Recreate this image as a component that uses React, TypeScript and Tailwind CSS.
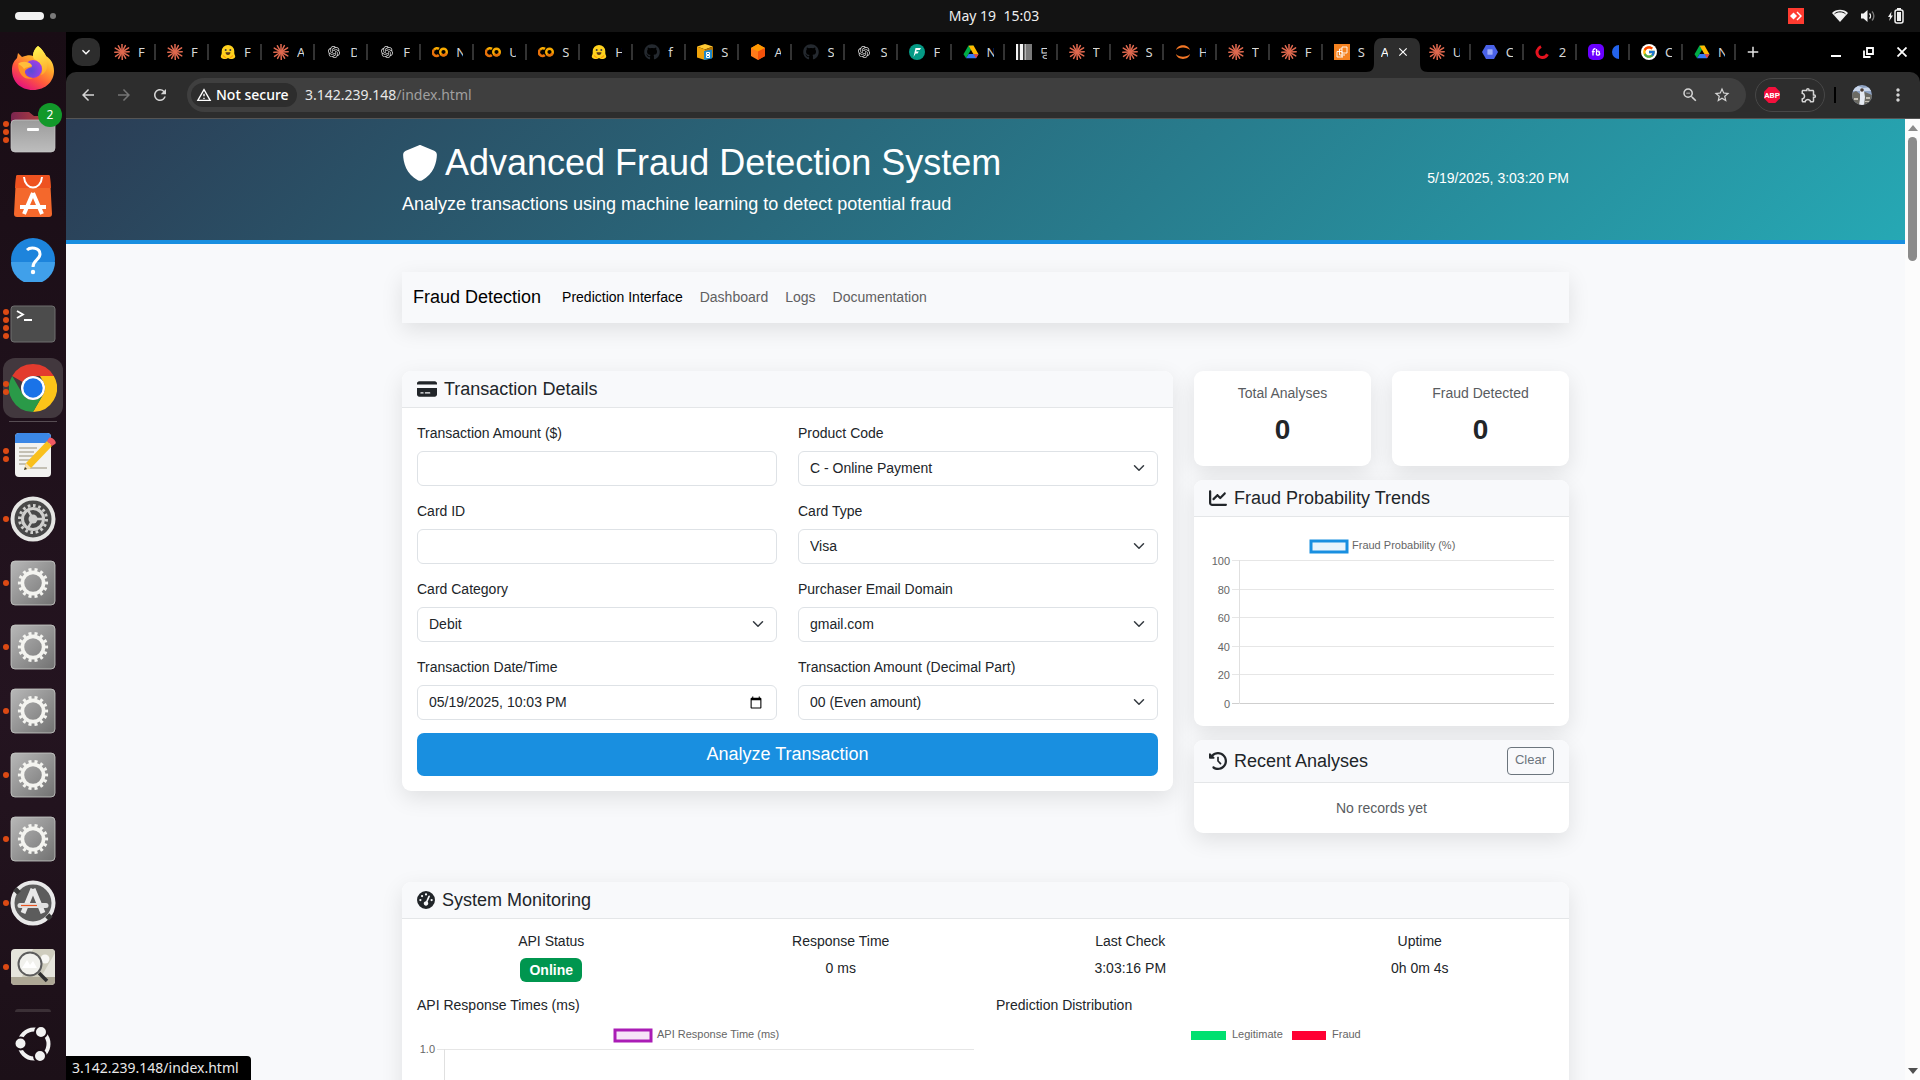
import React from "react";
import { FaShield, FaCreditCard, FaChartLine, FaClockRotateLeft, FaGaugeHigh, FaGithub } from "react-icons/fa6";
import { FcGoogle } from "react-icons/fc";
import { SiOpenai } from "react-icons/si";
import { MdArrowBack, MdArrowForward, MdRefresh, MdOutlineWarningAmber, MdStarBorder, MdMoreVert, MdOutlineExtension, MdZoomOut, MdAdd, MdClose, MdKeyboardArrowDown } from "react-icons/md";

const uiFont = "font-['Noto_Sans',sans-serif]";

/* ---------- Tab favicons ---------- */

function ClaudeIcon() {
  const rays = [0, 28, 58, 88, 120, 150, 178, 208, 236, 268, 300, 330];
  return (
    <svg viewBox="0 0 16 16" className="size-4">
      {rays.map((a, i) => (
        <line key={a} x1="8" y1="8" x2="8" y2={i % 2 ? 0.8 : 0.2} stroke="#e0694f" strokeWidth="1.5" strokeLinecap="round" transform={`rotate(${a} 8 8)`} />
      ))}
    </svg>
  );
}

function HuggingIcon() {
  return (
    <svg viewBox="0 0 16 16" className="size-4">
      <path d="M8 1a6.300 6.300 0 0 1 6.300 6.300c0 1.700-.2 2.500.7 4.200.7 1.500-.2 3-2 3.300C10 15.400 9 14.200 8 14.200s-2 1.200-5 .6c-1.800-.3-2.700-1.800-2-3.300.9-1.700.7-2.500.7-4.200A6.300 6.300 0 0 1 8 1z" fill="#ffd21e" />
      <circle cx="5.700" cy="6" r="1" fill="#3a3b45" />
      <circle cx="10.300" cy="6" r="1" fill="#3a3b45" />
      <path d="M5.500 8.300h5c0 1.600-1 2.600-2.500 2.600s-2.500-1-2.500-2.600z" fill="#5b3a1a" />
      <path d="M3 11.500l3 2.500M13 11.500l-3 2.500" stroke="#ff9d0b" strokeWidth="1.200" />
    </svg>
  );
}

function ColabIcon() {
  return (
    <svg viewBox="0 0 16 16" className="size-4">
      <circle cx="11.500" cy="8" r="3.300" fill="none" stroke="#f9ab00" strokeWidth="2.400" />
      <path d="M7 4.900A3.500 3.500 0 0 0 2.100 5.700" fill="none" stroke="#f9ab00" strokeWidth="2.600" />
      <path d="M2.100 5.700A3.500 3.500 0 0 0 6.800 11" fill="none" stroke="#e8710a" strokeWidth="2.600" />
      <path d="M9.200 10.300a3.300 3.300 0 0 0 5.400-1" fill="none" stroke="#e8710a" strokeWidth="2.400" />
    </svg>
  );
}

function DriveIcon() {
  return (
    <svg viewBox="0 0 16 16" className="size-4">
      <path d="M5.500 1.500h5L8 6z" fill="#188038" />
      <path d="M5.500 1.500L.5 10.200l2.500 4L8 5.800z" fill="#00ac47" />
      <path d="M10.500 1.500l5 8.700h-5L5.600 1.700z" fill="#ffba00" />
      <path d="M3 14.200l2.600-4.300h9.900L13 14.200z" fill="#3478f6" />
      <path d="M15.500 10.200L13 14.200l-2.500-4z" fill="#ea4335" />
    </svg>
  );
}

function GptIcon() {
  return <SiOpenai className="size-3 text-[#d8d8d8]" />;
}

function GithubIcon() {
  return <FaGithub className="size-4 text-[#24292f]" />;
}

function BucketIcon() {
  return (
    <svg viewBox="0 0 16 16" className="size-4">
      <path d="M0 2.500L8 0l8 2.500-8 3z" fill="#ffc933" />
      <path d="M0 2.500l8 3V16l-8-2.500z" fill="#f0a30a" />
      <path d="M8 5.500l8-3v11L8 16z" fill="#b87400" />
      <path d="M7 7l8-1.500v9L7 16z" fill="#1e88c9" />
      <path d="M9.500 8.500h3v2h-3zM9.500 11.500h3v2h-3z" fill="none" stroke="#fff" strokeWidth="1" />
    </svg>
  );
}

function CubeIcon() {
  return (
    <svg viewBox="0 0 16 16" className="size-4">
      <path d="M8 0l7 4v8l-7 4-7-4V4z" fill="#ff7a1a" />
      <path d="M8 0l7 4-7 3.500L1 4z" fill="#ff9900" />
      <path d="M8 7.500L15 4v8l-7 4z" fill="#f4510b" />
    </svg>
  );
}

function GreenFIcon() {
  return (
    <svg viewBox="0 0 16 16" className="size-4">
      <circle cx="8" cy="8" r="8" fill="#059a85" />
      <path d="M6.500 4h5.500l-1.200 2H7.600l-.4 1.500h2.600L8.600 9.400H6.700L4.500 13z" fill="#fff" />
    </svg>
  );
}

function StripesIcon() {
  return (
    <svg viewBox="0 0 16 16" className="size-4">
      <rect width="16" height="16" fill="#7a7a7a" />
      <path d="M0 0h2v16H0zM4 0h3v16H4zM8.500 0h1v16h-1z" fill="#f4f4f4" />
      <path d="M2 0h2v16H2zM7 0h1.500v16H7z" fill="#333" />
    </svg>
  );
}

function JupyterIcon() {
  return (
    <svg viewBox="0 0 16 16" className="size-4">
      <path d="M1 6C2.500-.5 13.500-.5 15 6 12 2.500 4 2.500 1 6zM1 10c1.500 6.500 12.500 6.500 14 0-3 3.500-11 3.500-14 0z" fill="#f37726" />
    </svg>
  );
}

function Ec2Icon() {
  return (
    <svg viewBox="0 0 16 16" className="size-4">
      <rect width="16" height="16" fill="#f58220" />
      <path d="M8 3h5v6H8zM5.500 5v6h5.500M3 7.500V13h6M5.500 5H8M3 7.500h5V13" fill="none" stroke="#fff" strokeWidth=".9" />
    </svg>
  );
}

function HexIcon() {
  return (
    <svg viewBox="0 0 16 16" className="size-4">
      <path d="M4 1h8l4 7-4 7H4L0 8z" fill="#4a62e8" />
      <path d="M5.500 5.500h5v5h-5z" fill="#c4ceff" />
      <path d="M5.500 7h5M5.500 9h5" stroke="#4a62e8" strokeWidth=".6" />
    </svg>
  );
}

function RedSwirlIcon() {
  return (
    <svg viewBox="0 0 16 16" className="size-4">
      <path d="M6 2.500C2 4.500 1 8.500 3 11.500s7 3 9.500-1.300" fill="none" stroke="#e5131f" strokeWidth="3" />
    </svg>
  );
}

function PurpleIcon() {
  return (
    <svg viewBox="0 0 16 16" className="size-4">
      <rect width="16" height="16" rx="5" fill="#6a00ff" />
      <path d="M5 11.500V7c0-1.500 1-2.500 2.500-2.200M3.800 7.600h3M8.500 5v6M8.500 7.500c2-1 3.500 0 2.500 1.200 1.500 1 .5 3-2.500 2.300" fill="none" stroke="#fff" strokeWidth="1.300" />
    </svg>
  );
}

function GoogleIcon() {
  return (
    <span className="flex size-4 items-center justify-center rounded-full bg-white">
      <FcGoogle className="size-3.5" />
    </span>
  );
}

type Tab = { Icon?: React.ComponentType; label: string; active?: boolean };

const tabs: Tab[] = [
  { Icon: ClaudeIcon, label: "F" },
  { Icon: ClaudeIcon, label: "F" },
  { Icon: HuggingIcon, label: "F" },
  { Icon: ClaudeIcon, label: "A" },
  { Icon: GptIcon, label: "D" },
  { Icon: GptIcon, label: "F" },
  { Icon: ColabIcon, label: "N" },
  { Icon: ColabIcon, label: "U" },
  { Icon: ColabIcon, label: "S" },
  { Icon: HuggingIcon, label: "H" },
  { Icon: GithubIcon, label: "f" },
  { Icon: BucketIcon, label: "S" },
  { Icon: CubeIcon, label: "A" },
  { Icon: GithubIcon, label: "S" },
  { Icon: GptIcon, label: "S" },
  { Icon: GreenFIcon, label: "F" },
  { Icon: DriveIcon, label: "N" },
  { Icon: StripesIcon, label: "당" },
  { Icon: ClaudeIcon, label: "T" },
  { Icon: ClaudeIcon, label: "S" },
  { Icon: JupyterIcon, label: "H" },
  { Icon: ClaudeIcon, label: "T" },
  { Icon: ClaudeIcon, label: "F" },
  { Icon: Ec2Icon, label: "S" },
  { label: "A", active: true },
  { Icon: ClaudeIcon, label: "U" },
  { Icon: HexIcon, label: "C" },
  { Icon: RedSwirlIcon, label: "2" },
  { Icon: PurpleIcon, label: "" },
  { Icon: GoogleIcon, label: "C" },
  { Icon: DriveIcon, label: "N" },
];

function BrowserTab({ tab, beforeActive }: { tab: Tab; beforeActive: boolean }) {
  const { Icon } = tab;
  if (!Icon) {
    return (
      <div className="relative flex h-10 min-w-0 flex-1 items-center">
        <svg viewBox="0 0 62 34" className="absolute bottom-0 -left-[10px] h-[34px] w-[62px]" preserveAspectRatio="none">
          <path d="M0 34c6 0 8-3 8-9V10C8 3 11 0 17 0h28c6 0 9 3 9 10v15c0 6 2 9 8 9z" fill="#2d2d2d" />
        </svg>
        <div className="relative flex items-center pl-[5px]">
          <span className="w-[7px] overflow-hidden text-[13px] leading-[18px] text-white">{tab.label}</span>
          <button aria-label="Close tab" className="ml-2 flex text-white">
            <MdClose className="size-3.5" />
          </button>
        </div>
      </div>
    );
  }
  return (
    <div className="flex h-10 min-w-0 flex-1 items-center pl-[11px]">
      <span className="flex size-4 shrink-0 items-center justify-center">
        <Icon />
      </span>
      <span className="ml-2 h-[18px] w-[7px] shrink-0 overflow-hidden text-[13px] leading-[18px] text-[#d6d6d6]">
        {tab.label || <span className="mt-[2px] block size-3.5 rounded-full bg-[#2463eb]" />}
      </span>
      {!beforeActive && <span className="ml-auto h-4 w-0.5 bg-[#333]" />}
    </div>
  );
}

function TabStrip() {
  const activeIndex = tabs.findIndex((t) => t.active);
  return (
    <div className="flex h-10 items-start bg-black">
      <button aria-label="Search tabs" className="mt-1.5 ml-1.5 flex size-7 shrink-0 items-center justify-center rounded-[10px] bg-[#2d2d2d] text-white">
        <MdKeyboardArrowDown className="size-4" />
      </button>
      <div className="ml-[3px] flex min-w-0 flex-1">
        {tabs.map((t, i) => (
          <BrowserTab key={i} tab={t} beforeActive={i === activeIndex - 1} />
        ))}
      </div>
      <div className="flex h-10 w-46 shrink-0 items-center pr-0.5 text-[#e3e3e3]">
        <button aria-label="New tab" className="ml-2 flex">
          <MdAdd className="size-[18px]" />
        </button>
        <button aria-label="Minimize" className="ml-auto flex w-[33px] justify-center">
          <span className="mt-2 h-0.5 w-2.5 bg-white" />
        </button>
        <button aria-label="Restore" className="flex w-[33px] justify-center">
          <svg viewBox="0 0 11 11" className="size-[11px]" fill="none" stroke="#fff" strokeWidth="1.800">
            <path d="M4 1h6v6H4zM1 3.500V10h6.500" />
          </svg>
        </button>
        <button aria-label="Close" className="flex w-[33px] justify-center">
          <svg viewBox="0 0 10 10" className="size-2.5" stroke="#fff" strokeWidth="1.800">
            <path d="M.5.5l9 9M9.500.5l-9 9" />
          </svg>
        </button>
      </div>
    </div>
  );
}

function Toolbar() {
  return (
    <div className="flex h-[47px] items-center rounded-t-[10px] border-b border-[#555] bg-[#2d2d2d] text-[#d5d5d5]">
      <button aria-label="Back" className="ml-[13px] flex">
        <MdArrowBack className="size-[18px]" />
      </button>
      <button aria-label="Forward" className="ml-[18px] flex text-[#757575]">
        <MdArrowForward className="size-[18px]" />
      </button>
      <button aria-label="Reload" className="ml-[18px] flex">
        <MdRefresh className="size-[18px]" />
      </button>
      <div className="ml-[18px] flex h-[34px] flex-1 items-center rounded-full bg-[#3f3f3f] pr-[15px] pl-1">
        <button className="flex h-6 w-[106px] items-center gap-1 rounded-full bg-[#2d2d2d] pl-[5px] text-[14px] leading-[22px] font-medium text-white">
          <MdOutlineWarningAmber className="size-4" />
          Not secure
        </button>
        <span className="ml-2 text-[14px] leading-[22px] text-[#e8e8e8]">
          3.142.239.148<span className="text-[#9f9f9f]">/index.html</span>
        </span>
        <button aria-label="Zoom" className="mr-3.5 ml-auto flex">
          <MdZoomOut className="size-[18px]" />
        </button>
        <button aria-label="Bookmark this page" className="flex">
          <MdStarBorder className="size-[18px]" />
        </button>
      </div>
      <div className="ml-[9px] flex h-[34px] w-[70px] items-center justify-between rounded-full border border-[#474747] pr-1.5 pl-2">
        <button aria-label="Adblock Plus" className="flex">
          <svg viewBox="0 0 16 16" className="size-4">
            <path d="M4.700 0h6.600L16 4.700v6.600L11.300 16H4.700L0 11.300V4.700z" fill="#f4103c" />
            <text x="8" y="11" textAnchor="middle" fontSize="8" fontWeight="700" fill="#fff" fontFamily="Roboto, sans-serif">ABP</text>
          </svg>
        </button>
        <button aria-label="Extensions" className="flex">
          <MdOutlineExtension className="size-[18px]" />
        </button>
      </div>
      <span className="ml-[9px] h-4 w-0.5 bg-black" />
      <button aria-label="Profile" className="ml-4 flex">
        <svg viewBox="0 0 20 20" className="size-5">
          <defs>
            <clipPath id="avatar"><circle cx="10" cy="10" r="10" /></clipPath>
          </defs>
          <g clipPath="url(#avatar)">
            <rect width="20" height="20" fill="#8fa3c4" />
            <path d="M0 3l6-2 5 2 9-1v4H0z" fill="#c9d6ea" />
            <path d="M0 8l4-2 4 3 5-2 7 3v10H0z" fill="#6b6a63" />
            <path d="M8 6h4l1 6-1 8H7l1-6z" fill="#e6eaf2" />
            <circle cx="10" cy="5" r="1.800" fill="#4a3a32" />
            <path d="M2 13h4v2H2zM14 12h4v2h-4zM13 16h4v1h-4z" fill="#c3bfb5" />
          </g>
        </svg>
      </button>
      <button aria-label="Menu" className="mr-3 ml-4 flex">
        <MdMoreVert className="size-[20px]" />
      </button>
    </div>
  );
}

/* ---------- Desktop shell ---------- */

function TopBar() {
  return (
    <header className={`${uiFont} grid h-8 shrink-0 grid-cols-[1fr_auto_1fr] items-center bg-[#131313] text-[14px] text-[#eee]`}>
      <div className="flex items-center gap-1.5 pl-[15px]">
        <span className="h-2 w-[29px] rounded-full bg-[#f2f2f2]" />
        <span className="size-1.5 rounded-full bg-[#7b7b7b]" />
      </div>
      <time className="pl-[68px] leading-[30px] whitespace-pre">May 19  15:03</time>
      <div className="flex items-center justify-end pr-4">
        <svg viewBox="0 0 16 16" className="mr-7 size-4">
          <rect width="16" height="16" fill="#ff3b30" />
          <path d="M5.500 4.500L9 8l-3.500 3.500L2 8z" fill="#fff" />
          <path d="M8.500 4.500l1-1L14 8l-4.500 4.500-1-1L12 8z" fill="#fff" />
        </svg>
        <svg viewBox="0 0 16 16" className="mr-3 size-4">
          <path d="M0 5C4 .8 12 .8 16 5l-8 9z" fill="#f2f2f2" />
          <path d="M2.500 5.800c3-2.600 8-2.600 11 0" fill="none" stroke="#131313" strokeWidth="1" />
        </svg>
        <svg viewBox="0 0 16 16" className="mr-3 size-4">
          <path d="M1 5.500h2.500L7.500 2v12L3.500 10.500H1z" fill="#f2f2f2" />
          <path d="M9.500 5.500c1.300 1.300 1.300 3.700 0 5" fill="none" stroke="#f2f2f2" strokeWidth="1.400" />
          <path d="M12 3.500c2.500 2.500 2.500 6.500 0 9" fill="none" stroke="#777" strokeWidth="1.400" />
        </svg>
        <svg viewBox="0 0 16 16" className="size-4">
          <path d="M3.500 3.500L0 9h2l-.8 4L5 7.500H3z" fill="#f2f2f2" />
          <rect x="7" y="2" width="8" height="13" rx="2" fill="none" stroke="#f2f2f2" strokeWidth="1.500" />
          <rect x="9" y="4" width="4" height="9" fill="#f2f2f2" />
          <rect x="9" y="0" width="4" height="2" fill="#f2f2f2" />
        </svg>
      </div>
    </header>
  );
}

function Firefox() {
  return (
    <svg viewBox="0 0 44 46" className="h-[46px] w-11">
      <defs>
        <linearGradient id="ffBody" x1=".85" y1=".1" x2=".3" y2="1">
          <stop offset="0" stopColor="#fff04a" />
          <stop offset=".35" stopColor="#ffa62b" />
          <stop offset=".65" stopColor="#ff5a3c" />
          <stop offset="1" stopColor="#e5107f" />
        </linearGradient>
        <linearGradient id="ffTail" x1=".5" y1="0" x2=".7" y2="1">
          <stop offset="0" stopColor="#fff44f" />
          <stop offset="1" stopColor="#ffa62b" />
        </linearGradient>
        <radialGradient id="ffGlobe" cx=".4" cy=".6" r=".7">
          <stop offset="0" stopColor="#5a4bd6" />
          <stop offset="1" stopColor="#a63de8" />
        </radialGradient>
      </defs>
      <path d="M27 1c4 3 6 6 8 10 5 3 8 8 8 15 0 10-8 19-21 19S1 36 1 25c0-6 2-9 5-12l1-5 4 4c5-2 9-2 11-1 0-4 2-8 5-10z" fill="url(#ffBody)" />
      <path d="M27 1c-5 5-6 9-4 13 8 4 10 10 7 16 6-2 8-9 5-19-2-4-4-7-8-10z" fill="url(#ffTail)" />
      <circle cx="22" cy="24" r="9" fill="url(#ffGlobe)" />
      <path d="M7 20c4-4 9-3 13 0l1 2c-4 1-6 2-7 4-1 4 3 7 8 7-7 3-14-2-15-13z" fill="#ff9126" />
      <path d="M7 19c3-3 9-3 13 0l1 2c-3 1-6 1-8 3-2-3-4-4-6-5z" fill="#ffbd3b" />
    </svg>
  );
}

function Files() {
  return (
    <span className="relative flex">
      <svg viewBox="0 0 46 42" className="h-[42px] w-[46px]">
        <defs>
          <linearGradient id="folderFront" x1="0" y1="0" x2="0" y2="1">
            <stop offset="0" stopColor="#9b9b9b" />
            <stop offset="1" stopColor="#bdbdbd" />
          </linearGradient>
          <linearGradient id="folderBack" x1="0" y1="0" x2="1" y2="0">
            <stop offset="0" stopColor="#7a2550" />
            <stop offset="1" stopColor="#c94a35" />
          </linearGradient>
        </defs>
        <path d="M1 5a4 4 0 0 1 4-4h14l5 4h17a4 4 0 0 1 4 4v20H1z" fill="url(#folderBack)" />
        <rect x="1" y="9" width="44" height="32" rx="4" fill="url(#folderFront)" stroke="#c8c8c8" strokeWidth=".7" />
        <rect x="17" y="17" width="12" height="3" rx="1" fill="#fff" />
      </svg>
      <span className="absolute -top-2 -right-[6px] flex size-6 items-center justify-center rounded-full bg-[#12982a] font-['Noto_Sans',sans-serif] text-[12px] text-white">2</span>
    </span>
  );
}

function Software() {
  return (
    <svg viewBox="0 0 38 44" className="h-11 w-[38px]">
      <path d="M4 1h30a2 2 0 0 1 2 2l2 37a3 3 0 0 1-3 3H3a3 3 0 0 1-3-3L2 3a2 2 0 0 1 2-2z" fill="#f4682c" />
      <path d="M4 1h30a2 2 0 0 1 2 2l1 11H1L2 3a2 2 0 0 1 2-2z" fill="#ee5220" />
      <path d="M10 3c1 14 17 14 18 0" fill="none" stroke="#fff" strokeWidth="2" />
      <path d="M19 19L10 40M19 19l9 21M6 33h26" stroke="#fff" strokeWidth="4" />
    </svg>
  );
}

function Help() {
  return (
    <svg viewBox="0 0 44 44" className="size-11">
      <circle cx="22" cy="22" r="22" fill="#1d84dc" />
      <path d="M0 24a22 22 0 0 0 44 0z" fill="#40a0ea" />
      <path d="M16 12c3-3 13-3 13 4 0 6-7 6-7 13" fill="none" stroke="#fff" strokeWidth="3" />
      <circle cx="22" cy="34" r="2.200" fill="#fff" />
    </svg>
  );
}

function Terminal() {
  return (
    <svg viewBox="0 0 46 38" className="h-[38px] w-[46px]">
      <rect x="1" y="1" width="44" height="36" rx="3" fill="#4c4c4c" stroke="#6e6e6e" />
      <path d="M7 6l6 3.500L7 13M14 15h8" fill="none" stroke="#fff" strokeWidth="1.800" />
    </svg>
  );
}

function Chrome() {
  return (
    <span className="flex size-[60px] items-center justify-center rounded-xl bg-[#42383e]">
      <svg viewBox="0 0 48 48" className="size-12">
        <path d="M24 0a24 24 0 0 1 20.800 12H24a12 12 0 0 0-10.400 6L3.200 12A24 24 0 0 1 24 0z" fill="#e33b2e" />
        <path d="M44.800 12A24 24 0 0 1 24 48l10.400-18A12 12 0 0 0 34.400 18L31 12z" fill="#fcc419" />
        <path d="M3.200 12A24 24 0 0 0 24 48l10.400-18a12 12 0 0 1-20.800 0z" fill="#2a9a48" />
        <circle cx="24" cy="24" r="12" fill="#fff" />
        <circle cx="24" cy="24" r="9.700" fill="#1a73e8" />
      </svg>
    </span>
  );
}

function TextEditor() {
  return (
    <svg viewBox="0 0 46 46" className="size-[46px]">
      <rect x="5" y="1" width="36" height="44" rx="4" fill="#f2f2f0" />
      <path d="M5 11V5a4 4 0 0 1 4-4h28a4 4 0 0 1 4 4v6z" fill="#3b87e6" />
      <path d="M9 16h18M9 20h15M9 24h15M9 28h12M9 32h7M20 36h17" stroke="#c4c0b4" strokeWidth="2" />
      <path d="M14 38l2-7L37 9l5 5-21 22z" fill="#f9c01c" />
      <path d="M14 38l2-7 5 5z" fill="#f5dfb0" />
      <path d="M14 38l1-3 2 2z" fill="#333" />
      <path d="M37 9l2-3c2-2 9 4 6 6l-3 2z" fill="#ef5a62" />
    </svg>
  );
}

function SettingsApp() {
  return (
    <svg viewBox="0 0 46 46" className="size-[46px]">
      <circle cx="23" cy="23" r="20.500" fill="#484848" stroke="#e6e6e4" strokeWidth="4" />
      <circle cx="23" cy="23" r="13.500" fill="none" stroke="#cfcfcd" strokeWidth="3" pathLength="32" strokeDasharray="1 1" />
      <circle cx="23" cy="23" r="10.500" fill="none" stroke="#cfcfcd" strokeWidth="3" />
      <circle cx="23" cy="23" r="4.500" fill="#cfcfcd" />
      <path d="M23 23h10M23 23l-5-9M23 23l-5 9" stroke="#cfcfcd" strokeWidth="2.500" />
    </svg>
  );
}

function GearApp() {
  return (
    <svg viewBox="0 0 46 46" className="size-[46px]">
      <defs>
        <linearGradient id="gearTile" x1="0" y1="0" x2="1" y2="1">
          <stop offset="0" stopColor="#b8b8b8" />
          <stop offset="1" stopColor="#717171" />
        </linearGradient>
      </defs>
      <rect x="1" y="1" width="44" height="44" rx="4" fill="url(#gearTile)" stroke="#c9cbc8" strokeWidth=".8" />
      <circle cx="23" cy="23" r="13.500" fill="none" stroke="#f4f4f0" strokeWidth="3.200" pathLength="28" strokeDasharray="1 1" strokeDashoffset=".5" />
      <circle cx="23" cy="23" r="10.600" fill="none" stroke="#f4f4f0" strokeWidth="3.600" />
    </svg>
  );
}

function Updater() {
  return (
    <svg viewBox="0 0 46 46" className="size-[46px]">
      <circle cx="23" cy="23" r="20.500" fill="#5c5c5c" stroke="#e9e9e9" strokeWidth="4" />
      <path d="M5 9l4 4M37 39l4-4" stroke="#3b3b3b" strokeWidth="5" />
      <path d="M23 9L13 33M23 9l10 24" stroke="#e9e9e9" strokeWidth="5" />
      <path d="M10 25.500h26" stroke="#e0e0e0" strokeWidth="5" strokeLinecap="round" />
      <path d="M11 25.500h16" stroke="#e95420" strokeWidth="1.200" />
    </svg>
  );
}

function ImageViewer() {
  return (
    <svg viewBox="0 0 46 38" className="h-[38px] w-[46px]">
      <rect x="1" y="1" width="44" height="36" rx="4" fill="#e6e5dc" />
      <path d="M23 1h18a4 4 0 0 1 4 4l-14 24H12z" fill="#cfcdbe" />
      <path d="M1 29h44v4a4 4 0 0 1-4 4H5a4 4 0 0 1-4-4z" fill="#ada795" />
      <circle cx="35" cy="11" r="4.500" fill="#f7f7f4" />
      <circle cx="20" cy="16" r="11.500" fill="#f1f1ed" stroke="#5c5c5c" strokeWidth="2" />
      <path d="M12 20l5-8 3 5 3-4 4 7z" fill="#fff" />
      <path d="M29 25l8 8" stroke="#2e2e2e" strokeWidth="3.500" />
    </svg>
  );
}

function UbuntuLogo() {
  return (
    <svg viewBox="0 0 36 36" className="size-9">
      <circle cx="19" cy="18" r="14.500" fill="none" stroke="#f2f2f2" strokeWidth="4" />
      <g fill="#f2f2f2" stroke="#1c0f17" strokeWidth="2">
        <circle cx="5.500" cy="17.500" r="6" />
        <circle cx="26" cy="6" r="6" />
        <circle cx="25" cy="30" r="6" />
      </g>
    </svg>
  );
}

const pinned = [
  { name: "Firefox", Icon: Firefox, windows: 0 },
  { name: "Files", Icon: Files, windows: 3 },
  { name: "App Center", Icon: Software, windows: 0 },
  { name: "Help", Icon: Help, windows: 0 },
  { name: "Terminal", Icon: Terminal, windows: 4 },
  { name: "Chrome", Icon: Chrome, windows: 2 },
];

const running = [
  { name: "Text Editor", Icon: TextEditor, windows: 2 },
  { name: "Settings", Icon: SettingsApp, windows: 1 },
  { name: "Utility 1", Icon: GearApp, windows: 1 },
  { name: "Utility 2", Icon: GearApp, windows: 1 },
  { name: "Utility 3", Icon: GearApp, windows: 1 },
  { name: "Utility 4", Icon: GearApp, windows: 1 },
  { name: "Utility 5", Icon: GearApp, windows: 1 },
  { name: "Software Updater", Icon: Updater, windows: 1 },
  { name: "Image Viewer", Icon: ImageViewer, windows: 1 },
];

function DockItem({ name, Icon, windows }: (typeof pinned)[number]) {
  return (
    <button aria-label={name} className="relative flex h-16 w-full shrink-0 items-center justify-center">
      <Icon />
      <span className="absolute inset-y-0 left-[3px] flex flex-col items-center justify-center gap-0.5">
        {Array.from({ length: windows }, (_, i) => (
          <span key={i} className="size-1.5 rounded-full bg-[#dc4a14]" />
        ))}
      </span>
    </button>
  );
}

function Dock() {
  return (
    <nav aria-label="Dock" className="flex w-[66px] shrink-0 flex-col items-center bg-linear-to-b from-[#190d15] via-[#241420] via-65% to-[#1c1018] pt-1">
      {pinned.map((p) => <DockItem key={p.name} {...p} />)}
      <span className="my-px h-px w-12 shrink-0 bg-[#574d53]" />
      {running.map((p) => <DockItem key={p.name} {...p} />)}
      <span className="mt-2.5 h-[3px] w-9 shrink-0 rounded-t-full bg-[#3b3036]" />
      <button aria-label="Show applications" className="mt-auto mb-[18px] flex">
        <UbuntuLogo />
      </button>
    </nav>
  );
}

/* ---------- Web page ---------- */

const shadow = "shadow-[0_7px_22px_rgba(0,0,0,0.1)]";

function CardHeader({ icon, title, children }: { icon: React.ReactNode; title: string; children?: React.ReactNode }) {
  return (
    <div className="flex items-center rounded-t-[9px] border-b border-[#e4e6e8] bg-[#f8f9fb] px-[15px] py-[7px]">
      <h2 className="flex items-center gap-[7px] text-[18px] leading-[22px]">
        {icon}
        {title}
      </h2>
      {children}
    </div>
  );
}

const fieldClass = "h-[35px] w-full rounded-md border border-[#dee2e6] bg-white px-[11px] text-[14px] text-[#212529]";

const dateEditClass =
  "[&::-webkit-datetime-edit-fields-wrapper]:p-0 [&::-webkit-datetime-edit-text]:p-0 [&::-webkit-datetime-edit-month-field]:p-0 [&::-webkit-datetime-edit-day-field]:p-0 [&::-webkit-datetime-edit-year-field]:p-0 [&::-webkit-datetime-edit-hour-field]:p-0 [&::-webkit-datetime-edit-minute-field]:p-0";

type Field = { id: string; label: string; kind: "text" | "select" | "datetime-local"; value?: string };

const fields: Field[] = [
  { id: "amount", label: "Transaction Amount ($)", kind: "text" },
  { id: "product", label: "Product Code", kind: "select", value: "C - Online Payment" },
  { id: "card-id", label: "Card ID", kind: "text" },
  { id: "card-type", label: "Card Type", kind: "select", value: "Visa" },
  { id: "category", label: "Card Category", kind: "select", value: "Debit" },
  { id: "email", label: "Purchaser Email Domain", kind: "select", value: "gmail.com" },
  { id: "datetime", label: "Transaction Date/Time", kind: "datetime-local", value: "2025-05-19T22:03" },
  { id: "decimal", label: "Transaction Amount (Decimal Part)", kind: "select", value: "00 (Even amount)" },
];

function FormField({ id, label, kind, value }: Field) {
  return (
    <div>
      <label htmlFor={id} className="mb-[7px] block text-[14px] leading-[22px]">{label}</label>
      {kind === "select" ? (
        <div className="relative">
          <select id={id} className={`${fieldClass} block appearance-none`} defaultValue={value}>
            <option>{value}</option>
          </select>
          <svg viewBox="0 0 16 16" className="pointer-events-none absolute top-[11px] right-[13px] size-[12px]">
            <path d="M2 5l6 6 6-6" fill="none" stroke="#343a40" strokeWidth="2" strokeLinecap="round" strokeLinejoin="round" />
          </svg>
        </div>
      ) : (
        <input id={id} type={kind} defaultValue={value} className={`${fieldClass} ${dateEditClass} block`} />
      )}
    </div>
  );
}

function Stat({ label, value }: { label: string; value: string }) {
  return (
    <div className={`rounded-[9px] bg-white pt-[11px] pb-[19px] text-center ${shadow}`}>
      <div className="text-[14px] leading-[22px] text-[#595c5f]">{label}</div>
      <div className="mt-[9px] text-[28px] leading-[34px] font-bold">{value}</div>
    </div>
  );
}

function TrendChart() {
  const ticks = [100, 80, 60, 40, 20, 0];
  return (
    <svg viewBox="0 0 345 181" className="h-auto w-full text-[11px]" fill="#666">
      <rect x="102" y="10" width="36" height="11" fill="#e8f4fc" stroke="#198fe0" strokeWidth="3" />
      <text x="143" y="18">Fraud Probability (%)</text>
      {ticks.map((t, i) => {
        const y = 29.5 + Math.round(i * 28.6);
        return (
          <g key={t}>
            <text x="21" y={y + 4} textAnchor="end">{t}</text>
            <line x1="23" x2="345" y1={y} y2={y} stroke={t ? "#e6e6e6" : "#cfcfcf"} />
          </g>
        );
      })}
      <line x1="30.500" x2="30.500" y1="29" y2="173" stroke="#e0e0e0" />
    </svg>
  );
}

function ResponseChart() {
  return (
    <svg viewBox="0 0 558 230" className="h-auto w-full text-[11px]" fill="#666">
      <rect x="198" y="10" width="36" height="11" fill="#f7e4f8" stroke="#aa1cb5" strokeWidth="3" />
      <text x="240" y="18">API Response Time (ms)</text>
      <text x="18" y="33" textAnchor="end">1.0</text>
      <line x1="20" x2="557" y1="29.500" y2="29.500" stroke="#e6e6e6" />
      <line x1="27.500" x2="27.500" y1="29" y2="220" stroke="#e0e0e0" />
    </svg>
  );
}

function DistributionChart() {
  return (
    <svg viewBox="0 0 558 230" className="h-auto w-full text-[11px]" fill="#666">
      <rect x="195" y="11" width="35" height="9" fill="#00e070" />
      <text x="236" y="18">Legitimate</text>
      <rect x="296" y="11" width="34" height="9" fill="#ff0033" />
      <text x="336" y="18">Fraud</text>
    </svg>
  );
}

function WebPage() {
  const navLinks = ["Prediction Interface", "Dashboard", "Logs", "Documentation"];
  return (
    <main className="min-w-0 flex-1 overflow-hidden bg-[#f8f9fb] font-['Liberation_Sans',Arial,sans-serif] text-[14px] text-[#212529]">
      <header className="border-b-4 border-[#198fe0] bg-[linear-gradient(135deg,#2b3d55,#26a8b4)] py-[22px] text-white">
        <div className="mx-auto flex max-w-[1167px] items-center justify-between">
          <div>
            <h1 className="mb-[7px] flex items-center gap-[7px] text-[36px] leading-[43px]">
              <FaShield className="size-9" />
              Advanced Fraud Detection System
            </h1>
            <p className="text-[18px] leading-[27px]">Analyze transactions using machine learning to detect potential fraud</p>
          </div>
          <div className="pb-1 leading-[22px]">5/19/2025, 3:03:20 PM</div>
        </div>
      </header>

      <div className="mx-auto max-w-[1167px] pt-7">
        <nav className={`flex h-[51px] items-center gap-[17px] bg-[#f8f9fb] px-[11px] ${shadow}`}>
          <a href="#home" className="mr-1 text-[18px] text-black">Fraud Detection</a>
          {navLinks.map((l, i) => (
            <a key={l} href={`#${l}`} className={i === 0 ? "text-black" : "text-[#5f6061]"}>{l}</a>
          ))}
        </nav>

        <div className="mt-12 grid grid-cols-12 items-start gap-[21px]">
          <section className={`col-span-8 rounded-[9px] bg-white ${shadow}`}>
            <CardHeader icon={<FaCreditCard className="h-[18px] w-5" />} title="Transaction Details" />
            <form className="px-[15px] pt-3.5 pb-[15px]">
              <div className="grid grid-cols-2 gap-x-[21px] gap-y-3.5">
                {fields.map((f) => <FormField key={f.id} {...f} />)}
              </div>
              <button type="button" className="mt-[13px] h-[43px] w-full rounded-[7px] bg-[#198fe0] text-[18px] text-white">Analyze Transaction</button>
            </form>
          </section>

          <div className="col-span-4 flex flex-col gap-3.5">
            <div className="grid grid-cols-2 gap-[21px]">
              <Stat label="Total Analyses" value="0" />
              <Stat label="Fraud Detected" value="0" />
            </div>
            <section className={`rounded-[9px] bg-white ${shadow}`}>
              <CardHeader icon={<FaChartLine className="size-[18px]" />} title="Fraud Probability Trends" />
              <div className="px-[15px] py-3.5">
                <TrendChart />
              </div>
            </section>
            <section className={`rounded-[9px] bg-white ${shadow}`}>
              <CardHeader icon={<FaClockRotateLeft className="size-[18px]" />} title="Recent Analyses">
                <button className="ml-auto h-7 rounded border border-[#6c757d] px-[7px] pb-0.5 text-[13px] text-[#6c757d]">Clear</button>
              </CardHeader>
              <p className="p-3.5 text-center leading-[22px] text-[#595c5f]">No records yet</p>
            </section>
          </div>
        </div>

        <section className={`mt-[49px] rounded-[9px] bg-white ${shadow}`}>
          <CardHeader icon={<FaGaugeHigh className="size-[18px]" />} title="System Monitoring" />
          <div className="px-[15px] py-3.5">
            <div className="grid grid-cols-4 gap-[21px] text-center">
              <div>
                <h3 className="mb-2 leading-[17px]">API Status</h3>
                <span className="block"><span className="inline-block rounded-md bg-[#00964f] px-[9px] text-[14px] leading-6 font-bold text-white">Online</span></span>
              </div>
              {[["Response Time", "0 ms"], ["Last Check", "3:03:16 PM"], ["Uptime", "0h 0m 4s"]].map(([k, v]) => (
                <div key={k}>
                  <h3 className="mb-[7px] leading-[17px]">{k}</h3>
                  <div className="leading-[22px]">{v}</div>
                </div>
              ))}
            </div>
            <div className="mt-[15px] grid grid-cols-2 gap-[21px]">
              <div>
                <h3 className="mb-[6px] leading-[17px]">API Response Times (ms)</h3>
                <ResponseChart />
              </div>
              <div>
                <h3 className="mb-[6px] leading-[17px]">Prediction Distribution</h3>
                <DistributionChart />
              </div>
            </div>
          </div>
        </section>
      </div>
    </main>
  );
}

function Scrollbar() {
  return (
    <div aria-hidden="true" className="flex w-[15px] shrink-0 flex-col items-center bg-[#fcfcfc] py-1.5">
      <svg viewBox="0 0 10 6" className="h-[6px] w-[10px]"><path d="M5 0l5 6H0z" fill="#8b8b8b" /></svg>
      <span className="mt-1.5 h-[124px] w-[9px] rounded-full bg-[#8b8b8b]" />
      <svg viewBox="0 0 10 6" className="mt-auto h-[6px] w-[10px]"><path d="M5 6L0 0h10z" fill="#505050" /></svg>
    </div>
  );
}

export default function App() {
  return (
    <div className="flex h-screen flex-col overflow-hidden bg-black">
      <TopBar />
      <div className="flex min-h-0 flex-1">
        <Dock />
        <div className="relative flex min-w-0 flex-1 flex-col">
          <div className={uiFont}>
            <TabStrip />
            <Toolbar />
          </div>
          <div className="flex min-h-0 flex-1">
            <WebPage />
            <Scrollbar />
          </div>
          <div className={`absolute bottom-0 left-0 h-6 rounded-tr bg-black pr-3 pl-1.5 text-[14px] leading-6 text-[#e8e8e8] ${uiFont}`}>3.142.239.148/index.html</div>
        </div>
      </div>
    </div>
  );
}
